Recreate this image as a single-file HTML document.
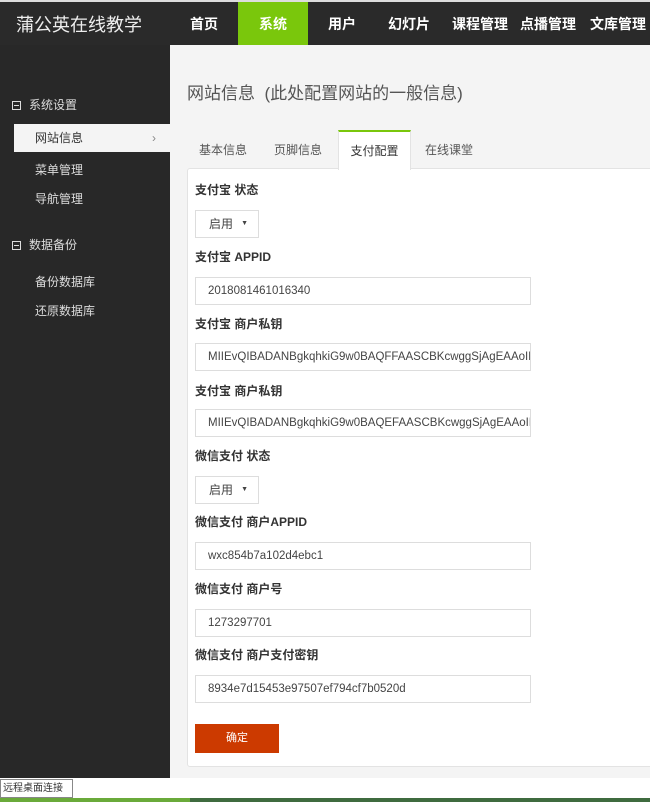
<!DOCTYPE html><html><head><meta charset="utf-8"><style>
*{margin:0;padding:0;box-sizing:border-box}
body{width:650px;height:802px;overflow:hidden;background:#f4f4f4;font-family:"Liberation Sans","Noto Sans CJK SC",sans-serif;position:relative;font-size:12px;color:#333}
.top{position:absolute;left:0;top:2px;width:650px;height:43px;background:#2a2a2a}
.top .logo{position:absolute;left:16px;top:9px;color:#eee;font-size:18px}
.nav{position:absolute;top:0;height:43px;line-height:45px;color:#fff;font-size:14px;font-weight:bold;text-align:center}
.side{position:absolute;left:0;top:45px;width:170px;height:733px;background:#282828;color:#ddd}
.side div{position:absolute;font-size:12px}
.box{display:inline-block;width:9px;height:9px;border:1px solid #ddd;position:relative;margin-right:8px;vertical-align:-1px}
.box:after{content:"";position:absolute;left:1px;top:3px;width:5px;height:1px;background:#ddd}
.title{position:absolute;left:187px;top:79px;font-size:17px;color:#555}
.tab{position:absolute;top:130px;height:38px;line-height:40px;font-size:12px;color:#555;text-align:center}
.card{position:absolute;left:187px;top:168px;width:470px;height:599px;background:#fff;border:1px solid #e3e3e3;border-radius:3px}
.lb{position:absolute;left:195px;font-size:12px;font-weight:bold;color:#333}
.in{position:absolute;left:195px;width:336px;height:28px;border:1px solid #ddd;line-height:26px;padding-left:12px;color:#444;font-size:11.5px;white-space:nowrap;overflow:hidden}
.sel{position:absolute;left:195px;width:64px;height:28px;border:1px solid #ddd;line-height:26px;padding-left:13px;color:#444}
.sel:after{content:"▼";position:absolute;right:10px;top:0;font-size:7px}
</style></head><body>
<div style="position:absolute;left:0;top:0;width:650px;height:2px;background:#ddd"></div>
<div class="top"><div class="logo">蒲公英在线教学</div>
<div class="nav" style="left:178px;width:52px">首页</div>
<div class="nav" style="left:238px;width:70px;background:#7ac70c">系统</div>
<div class="nav" style="left:316px;width:52px">用户</div>
<div class="nav" style="left:383px;width:52px">幻灯片</div>
<div class="nav" style="left:450px;width:60px">课程管理</div>
<div class="nav" style="left:518px;width:60px">点播管理</div>
<div class="nav" style="left:586px;width:64px">文库管理</div>
</div>
<div class="side">
<div style="left:12px;top:51px"><span class="box"></span>系统设置</div>
<div style="left:14px;top:79px;width:156px;height:28px;background:#f4f4f4;color:#333;line-height:28px;padding-left:21px">网站信息<span style="position:absolute;right:14px;color:#888">›</span></div>
<div style="left:35px;top:116px">菜单管理</div>
<div style="left:35px;top:145px">导航管理</div>
<div style="left:12px;top:191px"><span class="box"></span>数据备份</div>
<div style="left:35px;top:228px">备份数据库</div>
<div style="left:35px;top:257px">还原数据库</div>
</div>
<div class="title">网站信息 &nbsp;(此处配置网站的一般信息)</div>
<div class="card"></div>
<div class="tab" style="left:187px;width:72px">基本信息</div>
<div class="tab" style="left:262px;width:72px">页脚信息</div>
<div class="tab" style="left:338px;width:73px;background:#fff;border-top:2px solid #7ac70c;border-left:1px solid #e3e3e3;border-right:1px solid #e3e3e3;height:40px;line-height:38px;color:#333">支付配置</div>
<div class="tab" style="left:413px;width:72px">在线课堂</div>
<div class="lb" style="top:181px">支付宝 状态</div>
<div class="sel" style="top:210px">启用</div>
<div class="lb" style="top:248px">支付宝 APPID</div>
<div class="in" style="top:277px">2018081461016340</div>
<div class="lb" style="top:315px">支付宝 商户私钥</div>
<div class="in" style="top:343px">MIIEvQIBADANBgkqhkiG9w0BAQFFAASCBKcwggSjAgEAAoIBAQ</div>
<div class="lb" style="top:382px">支付宝 商户私钥</div>
<div class="in" style="top:409px">MIIEvQIBADANBgkqhkiG9w0BAQEFAASCBKcwggSjAgEAAoIBAQ</div>
<div class="lb" style="top:447px">微信支付 状态</div>
<div class="sel" style="top:476px">启用</div>
<div class="lb" style="top:513px">微信支付 商户APPID</div>
<div class="in" style="top:542px">wxc854b7a102d4ebc1</div>
<div class="lb" style="top:580px">微信支付 商户号</div>
<div class="in" style="top:609px">1273297701</div>
<div class="lb" style="top:646px">微信支付 商户支付密钥</div>
<div class="in" style="top:675px">8934e7d15453e97507ef794cf7b0520d</div>
<div style="position:absolute;left:195px;top:724px;width:84px;height:29px;background:#cc3a00;color:#fff;text-align:center;line-height:29px;font-size:11px">确定</div>
<div style="position:absolute;left:0;top:778px;width:650px;height:24px;background:#fff"></div>
<div style="position:absolute;left:0;top:779px;width:73px;height:19px;border:1px solid #888;background:#fff;font-size:10px;line-height:17px;padding-left:2px;color:#333">远程桌面连接</div>
<div style="position:absolute;left:0;top:798px;width:650px;height:4px;background:#3f6b3f"></div>
<div style="position:absolute;left:0;top:798px;width:190px;height:4px;background:#6aaa3a"></div>
</body></html>
